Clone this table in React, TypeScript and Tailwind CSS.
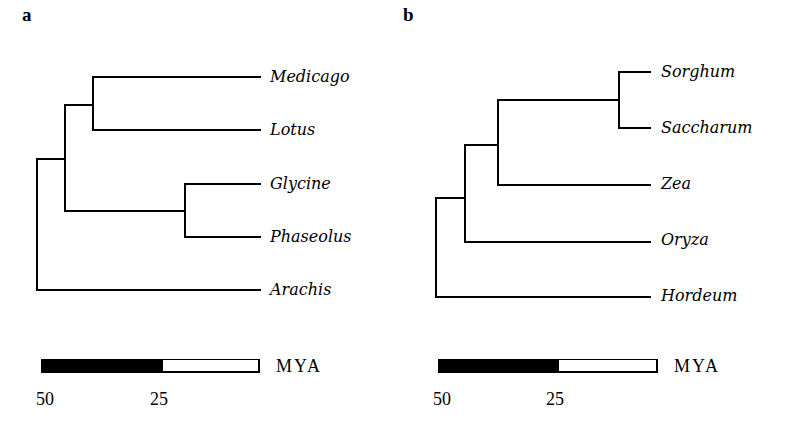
import React from "react";

type Seg = [number, number, number, number];

function Tree({ w, segs }: { w: number; segs: Seg[] }) {
  return (
    <svg width={w} height={290} viewBox={`0 0 ${w} 290`} className="shrink-0 block">
      {segs.map(([x1, y1, x2, y2], i) => (
        <line key={i} x1={x1} y1={y1} x2={x2} y2={y2} stroke="#000" strokeWidth={2} strokeLinecap="square" />
      ))}
    </svg>
  );
}

const segsA: Seg[] = [
  [93, 47, 260, 47],
  [93, 100, 260, 100],
  [93, 47, 93, 100],
  [65, 75, 93, 75],
  [185, 154, 260, 154],
  [185, 207, 260, 207],
  [185, 154, 185, 207],
  [65, 181, 185, 181],
  [65, 75, 65, 181],
  [37, 129, 65, 129],
  [37, 260, 260, 260],
  [37, 129, 37, 260],
];

const segsB: Seg[] = [
  [219, 42, 250, 42],
  [219, 98, 250, 98],
  [219, 42, 219, 98],
  [98, 70, 219, 70],
  [98, 155, 250, 155],
  [98, 70, 98, 155],
  [65, 115, 98, 115],
  [65, 212, 250, 212],
  [65, 115, 65, 212],
  [36, 168, 65, 168],
  [36, 267, 250, 267],
  [36, 168, 36, 267],
];

const labelA = "flex h-[53.3px] items-center whitespace-nowrap leading-[53px]";
const labelB = "flex h-[56.3px] items-center whitespace-nowrap leading-[56px]";

export default function App() {
  return (
    <div className="flex h-[446px] w-[787px] flex-row overflow-hidden bg-white text-black font-['Liberation_Serif','Times_New_Roman',serif]">
      {/* Panel a */}
      <div className="flex w-[400px] shrink-0 flex-col">
        <div className="h-[30px] pt-[5px] pl-[22px] text-[19px] font-bold leading-[20px]">a</div>
        <div className="flex h-[290px] flex-row">
          <Tree w={262} segs={segsA} />
          <div className="ml-[8px] flex flex-col pt-[20px] text-[16px] italic font-['DejaVu_Serif',serif]">
            <div className={labelA}>Medicago</div>
            <div className={labelA}>Lotus</div>
            <div className={labelA}>Glycine</div>
            <div className={labelA}>Phaseolus</div>
            <div className={labelA}>Arachis</div>
          </div>
        </div>
        <div className="mt-[39px] flex h-[14px] flex-row items-center">
          <div className="ml-[41px] flex h-[14px] w-[219px] flex-row border border-r-2 border-b-2 border-black bg-white">
            <div className="h-full w-[121px] bg-black" />
          </div>
          <div className="ml-[16px] text-[18px] leading-[18px] tracking-[2px]">MYA</div>
        </div>
        <div className="mt-[17px] flex flex-row text-[18px] leading-[18px]">
          <span className="ml-[36px]">50</span>
          <span className="ml-[96px]">25</span>
        </div>
      </div>

      {/* Panel b */}
      <div className="flex w-[387px] shrink-0 flex-col">
        <div className="h-[30px] pt-[5px] pl-[3px] text-[19px] font-bold leading-[20px]">b</div>
        <div className="flex h-[290px] flex-row">
          <Tree w={252} segs={segsB} />
          <div className="ml-[9px] flex flex-col pt-[14px] text-[16px] italic font-['DejaVu_Serif',serif]">
            <div className={labelB}>Sorghum</div>
            <div className={labelB}>Saccharum</div>
            <div className={labelB}>Zea</div>
            <div className={labelB}>Oryza</div>
            <div className={labelB}>Hordeum</div>
          </div>
        </div>
        <div className="mt-[39px] flex h-[14px] flex-row items-center">
          <div className="ml-[38px] flex h-[14px] w-[220px] flex-row border border-r-2 border-b-2 border-black bg-white">
            <div className="h-full w-[120px] bg-black" />
          </div>
          <div className="ml-[16px] text-[18px] leading-[18px] tracking-[2px]">MYA</div>
        </div>
        <div className="mt-[17px] flex flex-row text-[18px] leading-[18px]">
          <span className="ml-[33px]">50</span>
          <span className="ml-[95px]">25</span>
        </div>
      </div>
    </div>
  );
}
